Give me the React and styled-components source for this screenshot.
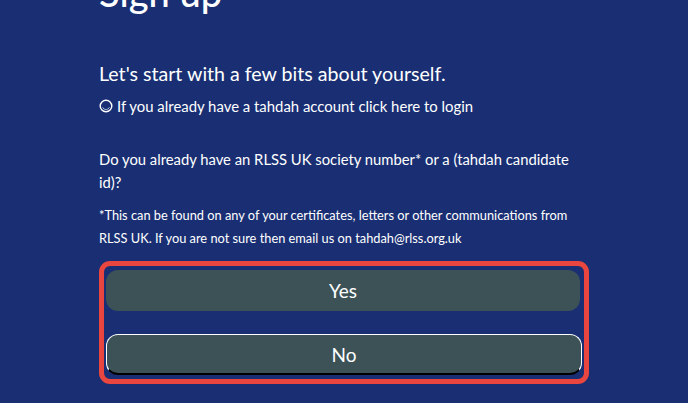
import React from "react";
import styled, { createGlobalStyle } from "styled-components";

const GlobalStyle = createGlobalStyle`
  html, body {
    margin: 0;
    padding: 0;
    background: #1a2f73;
    overflow: hidden;
  }
  body {
    font-family: Lato, "Open Sans", sans-serif;
    color: #fff;
  }
`;

const Page = styled.div`
  width: 688px;
  height: 403px;
  background: #1a2f73;
  overflow: hidden;
`;

const Form = styled.div`
  width: 490px;
  margin-left: 99px;
  display: flex;
  flex-direction: column;
`;

const Title = styled.h1`
  margin: -30px 0 0;
  font-size: 38px;
  font-weight: 500;
  line-height: 44px;
`;

const Lead = styled.h2`
  margin: 48px 0 0;
  font-size: 19.6px;
  font-weight: 400;
  line-height: 24px;
`;

const LoginLink = styled.a`
  display: flex;
  align-items: center;
  gap: 4px;
  margin-top: 10px;
  font-size: 14.9px;
  line-height: 20px;
  color: #fff;
  text-decoration: none;
`;

const Question = styled.p`
  margin: 32px 0 0;
  font-size: 14.8px;
  line-height: 23px;
`;

const Note = styled.p`
  margin: 10px 0 0;
  font-size: 12.8px;
  line-height: 23px;
`;

const Choices = styled.div`
  margin-top: 11px;
  border: 5px solid #e8463f;
  border-radius: 11px;
  padding: 4px 2px 4px 2px;
  display: flex;
  flex-direction: column;
  gap: 23px;
`;

const Choice = styled.button`
  height: 41px;
  border-radius: 12px;
  background: #3c5257;
  color: #fff;
  font-family: Lato, "Open Sans", sans-serif;
  font-size: 19px;
  border: 0;
  margin-right: ${(p) => (p.$focused ? "0" : "2px")};
  ${(p) =>
    p.$focused &&
    `
    border-top: 1.5px solid #fff;
    border-left: 1px solid #fff;
    border-right: 1px solid #fff;
    border-bottom: 2px solid #000;
  `}
`;

const Ring = () => (
  <svg width="14" height="14" viewBox="0 0 14 14">
    <circle cx="7" cy="7" r="5.8" fill="none" stroke="#fff" strokeWidth="1.4" />
    <path d="M3.6 8.2a3.6 3.6 0 0 0 6.8 0" fill="none" stroke="#9fb0d8" strokeWidth="1" />
  </svg>
);

export default function App() {
  return (
    <Page>
      <GlobalStyle />
      <Form>
        <Title>Sign up</Title>
        <Lead>Let's start with a few bits about yourself.</Lead>
        <LoginLink href="#">
          <Ring />
          If you already have a tahdah account click here to login
        </LoginLink>
        <Question>
          Do you already have an RLSS UK society number* or a (tahdah candidate id)?
        </Question>
        <Note>
          *This can be found on any of your certificates, letters or other
          communications from RLSS UK. If you are not sure then email us on
          tahdah@rlss.org.uk
        </Note>
        <Choices>
          <Choice>Yes</Choice>
          <Choice $focused>No</Choice>
        </Choices>
      </Form>
    </Page>
  );
}
